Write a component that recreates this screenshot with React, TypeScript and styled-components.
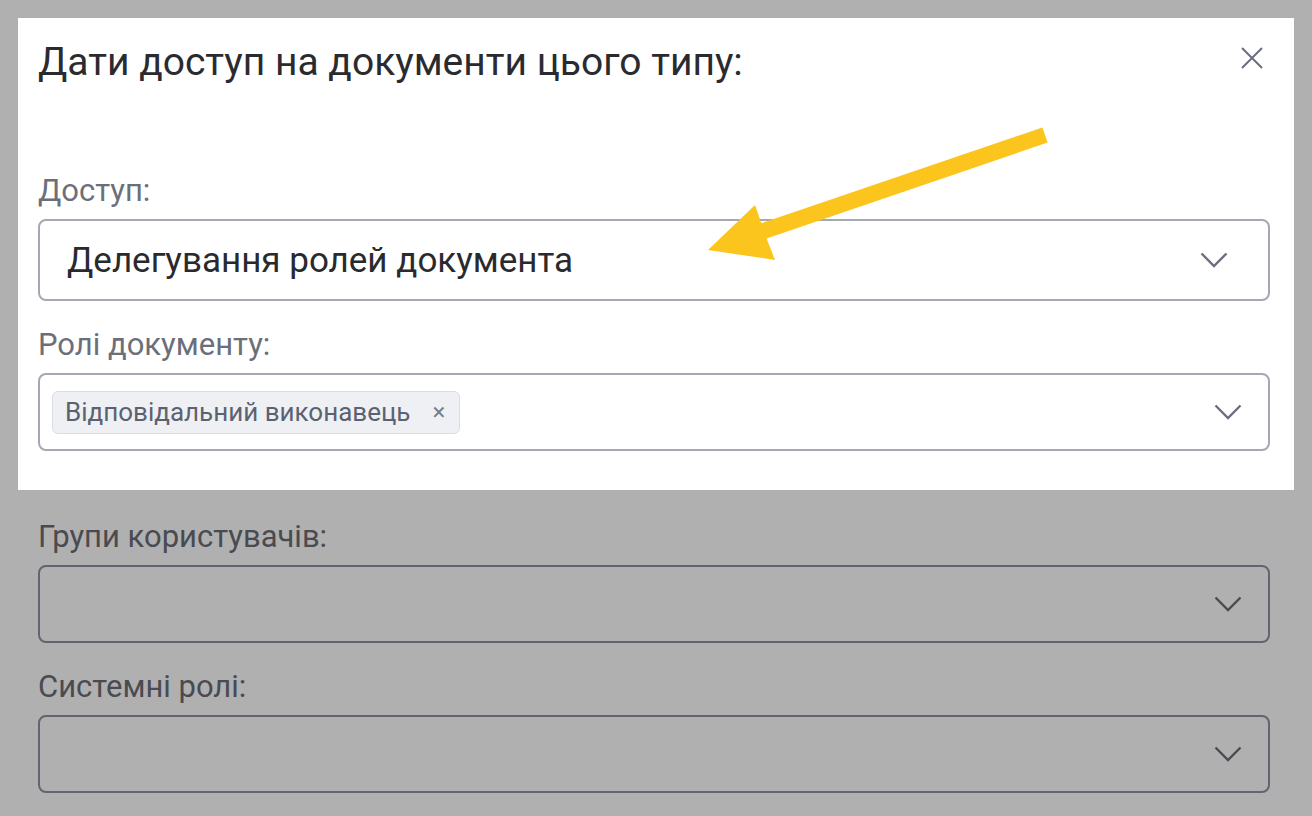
import { createGlobalStyle, styled } from 'styled-components';

const GlobalStyle = createGlobalStyle`
  html, body {
    margin: 0;
    padding: 0;
    background: #b0b0b0;
  }
  * {
    box-sizing: border-box;
  }
  body {
    font-family: Roboto, 'Noto Sans', 'Liberation Sans', sans-serif;
  }
`;

const Page = styled.div`
  position: relative;
  width: 1312px;
  height: 816px;
  padding: 18px;
  overflow: hidden;
  background: #b0b0b0;
`;

const Spotlight = styled.section`
  background: #ffffff;
  padding: 0 24px 39px 20px;
`;

const Header = styled.div`
  display: flex;
  align-items: center;
  justify-content: space-between;
  height: 90px;
  margin-bottom: 65px;
`;

const Title = styled.h2`
  margin: 0 0 2px;
  font-size: 39px;
  font-weight: 400;
  color: #2b2b2f;
`;

const CloseButton = styled.button`
  display: flex;
  align-items: center;
  justify-content: center;
  width: 40px;
  height: 40px;
  margin: 0 -2px 10px 0;
  border: none;
  background: none;
  padding: 0;
  cursor: pointer;
`;

const Dimmed = styled.section`
  padding: 29px 24px 0 20px;
`;

const Field = styled.div`
  display: flex;
  flex-direction: column;
  gap: 10px;
  & + & {
    margin-top: 26px;
  }
`;

const Label = styled.label<{ $dim?: boolean }>`
  font-size: 31px;
  line-height: 36px;
  color: ${({ $dim }) => ($dim ? '#4a4b51' : '#6c6f79')};
`;

const SelectBox = styled.div<{ $dim?: boolean; $tall?: boolean }>`
  display: flex;
  align-items: center;
  justify-content: space-between;
  height: ${({ $tall }) => ($tall ? '82px' : '78px')};
  padding: ${({ $tall }) => ($tall ? '0 40px 0 27px' : '0 26px 0 12px')};
  border: 2px solid ${({ $dim }) => ($dim ? '#62656f' : '#a4a8b2')};
  border-radius: 8px;
  background: ${({ $dim }) => ($dim ? 'transparent' : '#ffffff')};
`;

const Value = styled.span`
  font-size: 35px;
  color: #2a2a2e;
`;

const Tag = styled.span`
  display: inline-flex;
  align-items: center;
  gap: 22px;
  height: 43px;
  padding: 0 14px 0 12px;
  background: #eef0f3;
  border: 1px solid #d9dce2;
  border-radius: 6px;
  font-size: 26px;
  color: #5c6172;
`;

const TagRemove = styled.span`
  font-size: 24px;
  color: #7a7e8b;
  line-height: 1;
`;

const Annotation = styled.svg`
  position: absolute;
  left: 0;
  top: 0;
  pointer-events: none;
`;

function Chevron({ color }: { color: string }) {
  return (
    <svg width="28" height="16" viewBox="0 0 28 16">
      <polyline points="1.5,1.5 14,14 26.5,1.5" fill="none" stroke={color} strokeWidth="2.4" />
    </svg>
  );
}

export default function App() {
  return (
    <>
      <GlobalStyle />
      <Page>
        <Spotlight>
          <Header>
            <Title>Дати доступ на документи цього типу:</Title>
            <CloseButton aria-label="Закрити">
              <svg width="22" height="22" viewBox="0 0 22 22">
                <path d="M1 1 21 21 M21 1 1 21" stroke="#6b6c80" strokeWidth="2" fill="none" />
              </svg>
            </CloseButton>
          </Header>
          <Field>
            <Label>Доступ:</Label>
            <SelectBox $tall>
              <Value>Делегування ролей документа</Value>
              <Chevron color="#6b6e7e" />
            </SelectBox>
          </Field>
          <Field>
            <Label>Ролі документу:</Label>
            <SelectBox>
              <Tag>
                Відповідальний виконавець
                <TagRemove>×</TagRemove>
              </Tag>
              <Chevron color="#6b6e7e" />
            </SelectBox>
          </Field>
        </Spotlight>
        <Dimmed>
          <Field>
            <Label $dim>Групи користувачів:</Label>
            <SelectBox $dim>
              <span />
              <Chevron color="#4a4b52" />
            </SelectBox>
          </Field>
          <Field>
            <Label $dim>Системні ролі:</Label>
            <SelectBox $dim>
              <span />
              <Chevron color="#4a4b52" />
            </SelectBox>
          </Field>
        </Dimmed>
        <Annotation width="1312" height="816" viewBox="0 0 1312 816">
          <polygon
            points="1042.4,127.4 761.4,223.2 755,205 708,250 775,260 766.6,238.4 1047.6,142.6"
            fill="#fcc51d"
          />
        </Annotation>
      </Page>
    </>
  );
}
